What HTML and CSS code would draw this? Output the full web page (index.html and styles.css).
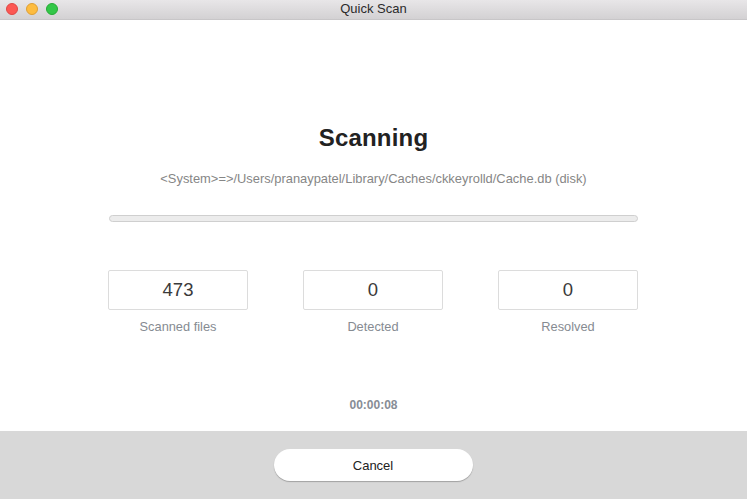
FILE: index.html
```html
<!DOCTYPE html>
<html>
<head>
<meta charset="utf-8">
<link rel="stylesheet" href="styles.css">
</head>
<body>
<div class="window">
  <div class="titlebar">
    <div class="lights">
      <span class="light red"></span>
      <span class="light yellow"></span>
      <span class="light green"></span>
    </div>
    <div class="title">Quick Scan</div>
  </div>
  <div class="content">
    <h1 class="heading">Scanning</h1>
    <div class="path">&lt;System&gt;=&gt;/Users/pranaypatel/Library/Caches/ckkeyrolld/Cache.db (disk)</div>
    <div class="progress"><div class="progress-fill"></div></div>
    <div class="stats">
      <div class="stat">
        <div class="box">473</div>
        <div class="label">Scanned files</div>
      </div>
      <div class="stat">
        <div class="box">0</div>
        <div class="label">Detected</div>
      </div>
      <div class="stat">
        <div class="box">0</div>
        <div class="label">Resolved</div>
      </div>
    </div>
    <div class="timer">00:00:08</div>
  </div>
  <div class="footer">
    <button class="cancel">Cancel</button>
  </div>
</div>
</body>
</html>
```
FILE: styles.css
```css
* { box-sizing: border-box; }
html, body { margin: 0; padding: 0; }
body {
  width: 747px;
  height: 499px;
  overflow: hidden;
  font-family: "Liberation Sans", Arial, sans-serif;
  background: #fff;
}
.window {
  display: flex;
  flex-direction: column;
  height: 499px;
}
.titlebar {
  height: 20px;
  flex: 0 0 20px;
  background: linear-gradient(#e8e6e8, #d3d1d3);
  border-bottom: 1px solid #c8c6c8;
  display: flex;
  align-items: center;
  position: relative;
}
.lights {
  display: flex;
  gap: 8px;
  padding-left: 6px;
  position: relative;
  top: -1px;
}
.light {
  width: 12px;
  height: 12px;
  border-radius: 50%;
  display: block;
}
.red { background: #fc5753; border: 1px solid #df4744; }
.yellow { background: #fdbc40; border: 1px solid #de9f34; }
.green { background: #33c748; border: 1px solid #27aa35; }
.title {
  position: absolute;
  left: 0;
  right: 0;
  top: 1px;
  text-align: center;
  font-size: 13px;
  color: #2b2b2b;
  pointer-events: none;
}
.content {
  flex: 1;
  display: flex;
  flex-direction: column;
  align-items: center;
}
.heading {
  margin: 104px 0 0;
  font-size: 24px;
  line-height: 28px;
  font-weight: bold;
  color: #222;
  letter-spacing: 0.2px;
}
.path {
  margin-top: 19px;
  font-size: 12.9px;
  line-height: 16px;
  color: #868686;
}
.progress {
  margin-top: 28px;
  width: 529px;
  height: 7px;
  border: 1px solid #cfcfcf;
  border-radius: 4px;
  background: #ececec;
}
.progress-fill { width: 0; }
.stats {
  display: flex;
  gap: 55px;
  margin-top: 48px;
  margin-right: 1px;
}
.stat {
  display: flex;
  flex-direction: column;
  align-items: center;
}
.box {
  width: 140px;
  height: 40px;
  border: 1px solid #dcdcdc;
  border-radius: 2px;
  display: flex;
  align-items: center;
  justify-content: center;
  font-size: 18.5px;
  color: #3a3a3a;
}
.label {
  margin-top: 10px;
  font-size: 12.8px;
  line-height: 14px;
  color: #868b92;
}
.timer {
  margin-top: 64px;
  font-size: 12px;
  font-weight: bold;
  color: #878d96;
}
.footer {
  height: 68px;
  flex: 0 0 68px;
  background: #d8d8d8;
  display: flex;
  justify-content: center;
  padding-top: 18px;
}
.cancel {
  width: 199px;
  height: 32px;
  border: none;
  border-radius: 16px;
  background: #fff;
  box-shadow: 0 1px 1px rgba(0,0,0,0.25);
  font-family: "Liberation Sans", Arial, sans-serif;
  font-size: 13px;
  color: #222;
  margin-right: 1px;
}
```
